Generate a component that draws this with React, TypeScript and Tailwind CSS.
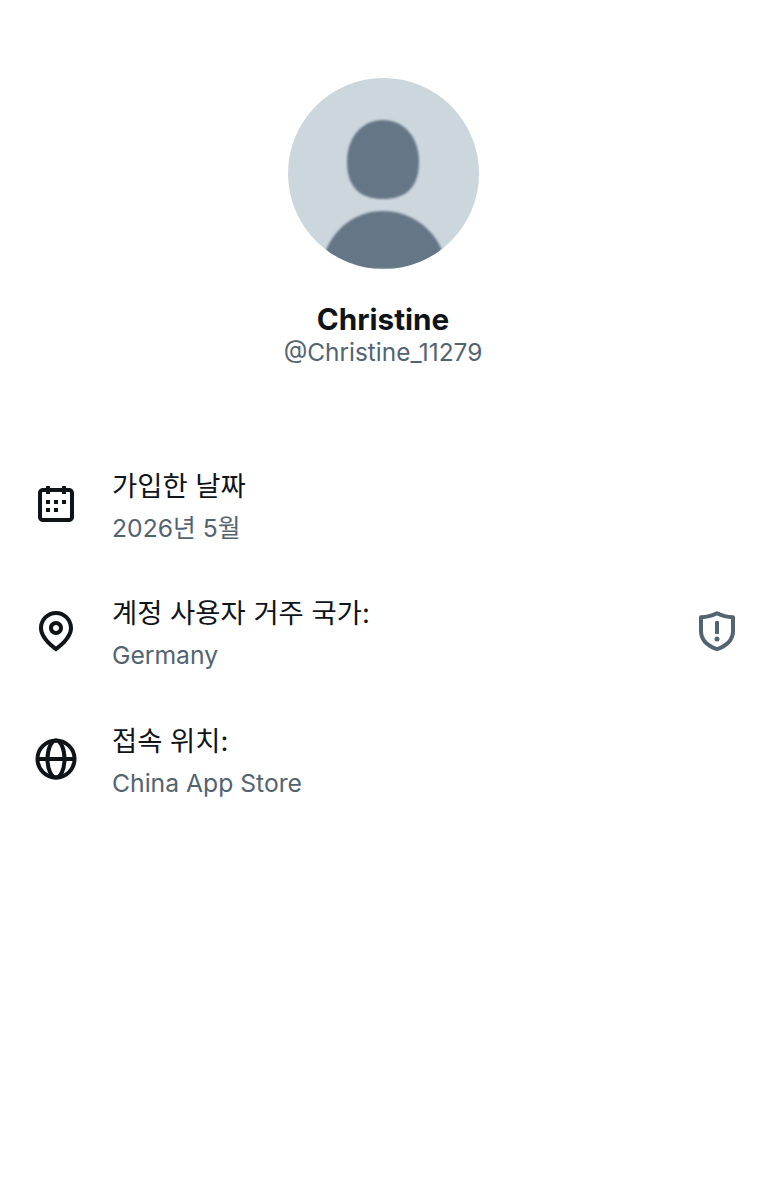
const FONT = "font-['Inter','Noto_Sans_CJK_KR',sans-serif]";

function Avatar() {
  return (
    <svg viewBox="0 0 191 191" className="block h-[191px] w-[191px]">
      <defs>
        <clipPath id="c">
          <circle cx="95.5" cy="95.5" r="95.5" />
        </clipPath>
      </defs>
      <g clipPath="url(#c)">
        <rect width="191" height="191" fill="#ccd6dd" />
        <g style={{ filter: "blur(0.8px)" }}>
          <path
            d="M95 42c-21 0-36 17-36 42 0 27 15 37 36 37s36-10 36-37c0-25-15-42-36-42z"
            fill="#657786"
          />
          <path d="M95 133c-28 0-50 18-59 44l-4 14h128l-4-14c-9-26-33-44-61-44z" fill="#657786" />
        </g>
      </g>
    </svg>
  );
}

function Calendar() {
  return (
    <svg viewBox="0 0 24 24" className="h-12 w-12 shrink-0" fill="#0f1419">
      <path d="M7 4V3h2v1h6V3h2v1h1.5C19.89 4 21 5.12 21 6.5v12c0 1.38-1.11 2.5-2.5 2.5h-13C4.12 21 3 19.88 3 18.5v-12C3 5.12 4.12 4 5.5 4H7zm0 2H5.5c-.27 0-.5.22-.5.5v12c0 .28.23.5.5.5h13c.28 0 .5-.22.5-.5v-12c0-.28-.22-.5-.5-.5H17v1h-2V6H9v1H7V6zm0 6h2v-2H7v2zm0 4h2v-2H7v2zm4-4h2v-2h-2v2zm0 4h2v-2h-2v2zm4-4h2v-2h-2v2z" />
    </svg>
  );
}

function Pin() {
  return (
    <svg viewBox="0 0 24 24" className="h-12 w-12 shrink-0" fill="#0f1419">
      <path d="M12 7c-1.93 0-3.5 1.57-3.5 3.5S10.07 14 12 14s3.5-1.57 3.5-3.5S13.93 7 12 7zm0 5c-.827 0-1.5-.673-1.5-1.5S11.173 9 12 9s1.5.673 1.5 1.5S12.827 12 12 12zm0-10c-4.687 0-8.5 3.813-8.5 8.5 0 5.967 7.621 11.116 7.945 11.332l.555.37.555-.37c.324-.216 7.945-5.365 7.945-11.332C20.5 5.813 16.687 2 12 2zm0 17.77c-1.665-1.241-6.5-5.196-6.5-9.27C5.5 6.916 8.416 4 12 4s6.5 2.916 6.5 6.5c0 4.073-4.835 8.028-6.5 9.27z" />
    </svg>
  );
}

function Globe() {
  return (
    <svg viewBox="0 0 24 24" className="h-12 w-12 shrink-0" fill="none" stroke="#0f1419" strokeWidth="2">
      <circle cx="12" cy="12" r="9.25" />
      <ellipse cx="12" cy="12" rx="4.25" ry="9.25" />
      <path d="M2.75 12h18.5" />
    </svg>
  );
}

function Shield() {
  return (
    <svg viewBox="0 0 24 24" className="h-12 w-12 shrink-0">
      <path
        d="M12 3.1c2.6 1.3 5.3 1.9 8 2v6.9c0 4.3-3.2 7.4-8 9.1-4.8-1.7-8-4.8-8-9.1V5.1c2.7-.1 5.4-.7 8-2z"
        fill="none"
        stroke="#536471"
        strokeWidth="2"
        strokeLinejoin="round"
      />
      <rect x="11" y="7" width="2" height="6.5" rx="0.5" fill="#536471" />
      <circle cx="12" cy="16" r="1.25" fill="#536471" />
    </svg>
  );
}

function Row({
  icon,
  title,
  value,
  trailing,
}: {
  icon: React.ReactNode;
  title: string;
  value: string;
  trailing?: React.ReactNode;
}) {
  return (
    <div className="flex h-[127.5px] items-center pl-8 pr-6">
      {icon}
      <div className="ml-8 min-w-0 flex-1 pt-[6px]">
        <div className="text-[27.4px] leading-[42px] text-[#0f1419]">{title}</div>
        <div className="text-[24.7px] leading-[42px] text-[#536471]">{value}</div>
      </div>
      {trailing}
    </div>
  );
}

export default function App() {
  return (
    <div className={`${FONT} min-h-[1200px] w-[765px] bg-white`}>
      <div className="flex flex-col items-center pl-px pt-[78px]">
        <Avatar />
        <div className="mt-[30px] text-[29.7px] font-bold leading-[40px] text-[#0f1419]">Christine</div>
        <div className="text-[24.4px] leading-[26px] text-[#536471]">@Christine_11279</div>
      </div>
      <div className="mt-[75px]">
        <Row icon={<Calendar />} title="가입한 날짜" value="2026년 5월" />
        <Row icon={<Pin />} title="계정 사용자 거주 국가:" value="Germany" trailing={<Shield />} />
        <Row icon={<Globe />} title="접속 위치:" value="China App Store" />
      </div>
    </div>
  );
}
